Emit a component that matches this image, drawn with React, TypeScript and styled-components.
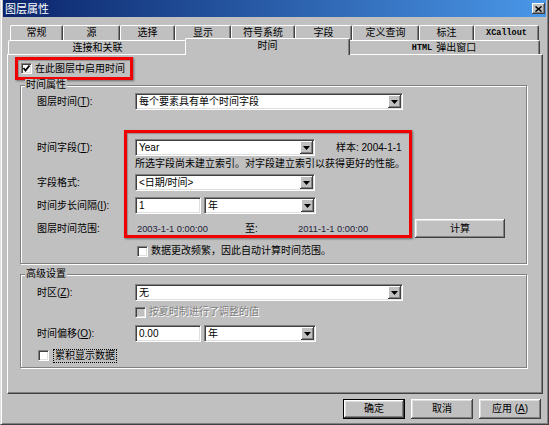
import React from "react";
import styled, { createGlobalStyle, css } from "styled-components";

const GlobalStyle = createGlobalStyle`
  html, body { margin: 0; padding: 0; background: #c0c0c0; }
  body {
    font-family: "Liberation Sans", "Noto Sans CJK SC", sans-serif;
    font-size: 10px;
    line-height: 12px;
    color: #000;
  }
  * { box-sizing: border-box; }
`;

const Window = styled.div`
  width: 549px;
  height: 425px;
  background: #c0c0c0;
  border-left: 1px solid #dfdfdf;
  border-right: 1px solid #404040;
  border-bottom: 1px solid #404040;
  box-shadow: inset 1px 0 #fff, inset -1px -1px #808080;
  padding: 0 2px 2px 2px;
  display: flex;
  flex-direction: column;
`;

const TitleBar = styled.div`
  height: 17px;
  flex: none;
  background: linear-gradient(to right, #0a246a, #4a97e8);
  display: flex;
  align-items: center;
  justify-content: space-between;
  padding: 0 1px 0 2px;
  color: #fff;
  font-size: 11px;
`;

const CloseBtn = styled.div`
  width: 13px;
  height: 11px;
  background: #c0c0c0;
  box-shadow: inset -1px -1px #404040, inset 1px 1px #fff, inset -2px -2px #808080;
  display: flex;
  align-items: center;
  justify-content: center;
`;

const Body = styled.div`
  flex: 1;
  display: flex;
  flex-direction: column;
  padding: 8px 3px 0 4px;
`;

const TabRow = styled.div<{ $h: number; $indent: number }>`
  display: flex;
  height: ${(p) => p.$h}px;
  padding-left: ${(p) => p.$indent}px;
  flex: none;
`;

const Tab = styled.div<{ $w: number; $selected?: boolean; $mono?: boolean }>`
  width: ${(p) => p.$w + (p.$selected ? 4 : 0)}px;
  height: 100%;
  flex: none;
  background: #c0c0c0;
  border-top: 1px solid #fff;
  border-left: 1px solid #fff;
  border-right: 1px solid #404040;
  box-shadow: inset -1px 0 #808080;
  border-top-left-radius: 2px;
  border-top-right-radius: 2px;
  display: flex;
  align-items: center;
  justify-content: center;
  font-size: 10px;
  white-space: pre;
  ${(p) =>
    p.$mono &&
    css`
      font-family: "Liberation Mono", "Noto Sans CJK SC", monospace;
      font-size: 8.5px;
      font-weight: bold;
    `}
  ${(p) =>
    p.$selected &&
    css`
      margin: -2px -2px -1px -2px;
      height: calc(100% + 3px);
      position: relative;
      z-index: 1;
      padding-bottom: 2px;
    `}
`;

const Mono = styled.span`
  font-family: "Liberation Mono", monospace;
  font-size: 8.5px;
  font-weight: bold;
  margin-right: 4px;
`;

const Panel = styled.div`
  height: 340px;
  flex: none;
  border-top: 1px solid #fff;
  border-left: 1px solid #fff;
  border-right: 1px solid #404040;
  border-bottom: 1px solid #404040;
  box-shadow: inset -1px -1px #808080;
  padding: 2px 0 0 7px;
  display: flex;
  flex-direction: column;
  align-items: flex-start;
`;

const EnableBox = styled.div`
  width: 118px;
  height: 23px;
  border: 3px solid #f00000;
  box-shadow: 1px 1px 2px rgba(0, 0, 0, 0.45), inset 1px 1px 1px rgba(0, 0, 0, 0.25);
  padding: 0 3px;
  display: flex;
  align-items: center;
`;

const Group = styled.div<{ $top: number; $h: number }>`
  position: relative;
  width: 507px;
  height: ${(p) => p.$h}px;
  margin: ${(p) => p.$top}px 0 0 5px;
  border: 1px solid #808080;
  box-shadow: inset 1px 1px #fff, 1px 1px #fff;
  padding-left: 16px;
  display: flex;
  flex-direction: column;
  align-items: flex-start;
`;

const Caption = styled.div`
  position: absolute;
  top: -7px;
  left: 4px;
  padding: 0 1px;
  background: #c0c0c0;
  line-height: 12px;
`;

const Highlight = styled.div<{ $l: number; $t: number; $w: number; $h: number }>`
  position: absolute;
  left: ${(p) => p.$l}px;
  top: ${(p) => p.$t}px;
  width: ${(p) => p.$w}px;
  height: ${(p) => p.$h}px;
  border: 3px solid #f00000;
  box-shadow: 1px 1px 2px rgba(0, 0, 0, 0.45), inset 1px 1px 1px rgba(0, 0, 0, 0.25);
  pointer-events: none;
`;

const FormRow = styled.div<{ $top: number; $h?: number }>`
  display: flex;
  align-items: center;
  height: ${(p) => p.$h ?? 17}px;
  margin-top: ${(p) => p.$top}px;
  flex: none;
`;

const Label = styled.div`
  width: 98px;
  flex: none;
  white-space: nowrap;
`;

const Sunken = css`
  height: 17px;
  flex: none;
  background: #fff;
  border: 1px solid;
  border-color: #808080 #fff #fff #808080;
  box-shadow: inset 1px 1px #404040, inset -1px -1px #dfdfdf;
  display: flex;
  align-items: center;
  padding: 1px;
`;

const ComboBox = styled.div<{ $w: number; $gap?: number }>`
  ${Sunken};
  width: ${(p) => p.$w}px;
  margin-left: ${(p) => p.$gap ?? 0}px;
`;

const ComboValue = styled.div`
  flex: 1;
  padding-left: 2px;
  white-space: nowrap;
  overflow: hidden;
`;

const DropBtn = styled.div`
  width: 13px;
  height: 13px;
  flex: none;
  background: #c0c0c0;
  box-shadow: inset -1px -1px #404040, inset 1px 1px #fff, inset -2px -2px #808080;
  display: flex;
  align-items: center;
  justify-content: center;
`;

const TextBox = styled.div<{ $w: number }>`
  ${Sunken};
  width: ${(p) => p.$w}px;
  padding-left: 3px;
`;

const Hint = styled.div<{ $top: number }>`
  margin: ${(p) => p.$top}px 0 0 98px;
  height: 13px;
  display: flex;
  align-items: center;
  white-space: nowrap;
`;

const Sample = styled.div`
  margin-left: 21px;
  white-space: nowrap;
`;

const Cell = styled.div<{ $w: number; $gap?: number; $dim?: boolean }>`
  width: ${(p) => p.$w}px;
  margin-left: ${(p) => p.$gap ?? 0}px;
  flex: none;
  white-space: nowrap;
  ${(p) =>
    p.$dim &&
    css`
      color: #23233a;
      font-size: 9.3px;
    `}
`;

const Button = styled.div<{ $w: number; $default?: boolean; $h?: number }>`
  width: ${(p) => p.$w}px;
  height: ${(p) => p.$h ?? 20}px;
  flex: none;
  background: #c0c0c0;
  display: flex;
  align-items: center;
  justify-content: center;
  box-shadow: inset -1px -1px #404040, inset 1px 1px #fff, inset -2px -2px #808080, inset 2px 2px #dfdfdf;
  ${(p) =>
    p.$default &&
    css`
      border: 1px solid #000;
    `}
`;

const CheckRow = styled.div<{ $top: number; $left: number; $h?: number; $gap?: number }>`
  display: flex;
  align-items: center;
  gap: ${(p) => p.$gap ?? 3}px;
  margin: ${(p) => p.$top}px 0 0 ${(p) => p.$left}px;
  height: ${(p) => p.$h ?? 13}px;
  flex: none;
  white-space: nowrap;
`;

const CheckBox = styled.div<{ $disabled?: boolean }>`
  width: 11px;
  height: 11px;
  flex: none;
  background: ${(p) => (p.$disabled ? "#c0c0c0" : "#fff")};
  border: 1px solid;
  border-color: #808080 #fff #fff #808080;
  box-shadow: inset 1px 1px #404040, inset -1px -1px #dfdfdf;
  display: flex;
  align-items: center;
  justify-content: center;
`;

const CheckText = styled.span<{ $disabled?: boolean; $focus?: boolean }>`
  ${(p) =>
    p.$disabled &&
    css`
      color: #808080;
      text-shadow: 1px 1px 0 #fff;
    `}
  ${(p) =>
    p.$focus &&
    css`
      border: 1px dotted #000;
      padding: 0 1px;
      line-height: 12px;
    `}
`;

const Footer = styled.div`
  display: flex;
  justify-content: flex-end;
  gap: 6px;
  margin-top: 5px;
  padding-right: 2px;
`;

const Arrow = () => (
  <svg width="7" height="4" viewBox="0 0 7 4">
    <polygon points="0,0 7,0 3.5,4" fill="#000" />
  </svg>
);

const Check = () => (
  <svg width="9" height="9" viewBox="0 0 9 9">
    <polyline points="1.5,4 3.5,6.5 7.5,1.5" fill="none" stroke="#000" strokeWidth="1.8" />
  </svg>
);

const Combo = ({ w, value, gap }: { w: number; value: string; gap?: number }) => (
  <ComboBox $w={w} $gap={gap}>
    <ComboValue>{value}</ComboValue>
    <DropBtn>
      <Arrow />
    </DropBtn>
  </ComboBox>
);

const row1Tabs: [string, number, boolean?][] = [
  ["常规", 53],
  ["源", 57],
  ["选择", 55],
  ["显示", 56],
  ["符号系统", 64],
  ["字段", 57],
  ["定义查询", 67],
  ["标注", 55],
  ["XCallout", 65, true],
];

export default function App() {
  return (
    <>
      <GlobalStyle />
      <Window>
        <TitleBar>
          <span>图层属性</span>
          <CloseBtn>
            <svg width="7" height="6" viewBox="0 0 7 6">
              <path d="M0.5 0.5 L6.5 5.5 M6.5 0.5 L0.5 5.5" stroke="#000" strokeWidth="1.5" />
            </svg>
          </CloseBtn>
        </TitleBar>
        <Body>
          <TabRow $h={15} $indent={3}>
            {row1Tabs.map(([t, w, mono]) => (
              <Tab key={t} $w={w} $mono={mono}>
                {t}
              </Tab>
            ))}
          </TabRow>
          <TabRow $h={14} $indent={1}>
            <Tab $w={179}>连接和关联</Tab>
            <Tab $w={161} $selected>
              时间
            </Tab>
            <Tab $w={192}>
              <Mono>HTML</Mono>弹出窗口
            </Tab>
          </TabRow>
          <Panel>
            <EnableBox>
              <CheckRow $top={0} $left={0}>
                <CheckBox>
                  <Check />
                </CheckBox>
                <span>在此图层中启用时间</span>
              </CheckRow>
            </EnableBox>

            <Group $top={5} $h={179}>
              <Caption>时间属性</Caption>
              <FormRow $top={7}>
                <Label>
                  图层时间(<u>T</u>):
                </Label>
                <Combo w={268} value="每个要素具有单个时间字段" />
              </FormRow>
              <FormRow $top={29}>
                <Label>
                  时间字段(<u>T</u>):
                </Label>
                <Combo w={180} value="Year" />
                <Sample>样本: 2004-1-1</Sample>
              </FormRow>
              <Hint $top={1}>所选字段尚未建立索引。对字段建立索引以获得更好的性能。</Hint>
              <FormRow $top={4}>
                <Label>字段格式:</Label>
                <Combo w={180} value="<日期/时间>" />
              </FormRow>
              <FormRow $top={6}>
                <Label>
                  时间步长间隔(<u>I</u>):
                </Label>
                <TextBox $w={66}>1</TextBox>
                <Combo w={112} gap={3} value="年" />
              </FormRow>
              <FormRow $top={5} $h={19}>
                <Label>图层时间范围:</Label>
                <Cell $w={108} $gap={2} $dim>
                  2003-1-1 0:00:00
                </Cell>
                <Cell $w={53}>至:</Cell>
                <Cell $w={117} $dim>
                  2011-1-1 0:00:00
                </Cell>
                <Button $w={90} $h={19}>
                  计算
                </Button>
              </FormRow>
              <CheckRow $top={6} $left={100} $h={14}>
                <CheckBox />
                <span>数据更改频繁，因此自动计算时间范围。</span>
              </CheckRow>
              <Highlight $l={103} $t={44} $w={288} $h={108} />
            </Group>

            <Group $top={10} $h={94}>
              <Caption>高级设置</Caption>
              <FormRow $top={9}>
                <Label>
                  时区(<u>Z</u>):
                </Label>
                <Combo w={268} value="无" />
              </FormRow>
              <CheckRow $top={5} $left={98} $h={12}>
                <CheckBox $disabled />
                <CheckText $disabled>按夏时制进行了调整的值</CheckText>
              </CheckRow>
              <FormRow $top={7}>
                <Label>
                  时间偏移(<u>O</u>):
                </Label>
                <TextBox $w={66}>0.00</TextBox>
                <Combo w={112} gap={3} value="年" />
              </FormRow>
              <CheckRow $top={6} $left={1} $h={15} $gap={4}>
                <CheckBox />
                <CheckText $focus>累积显示数据</CheckText>
              </CheckRow>
            </Group>
          </Panel>
          <Footer>
            <Button $w={62} $default>
              确定
            </Button>
            <Button $w={62}>取消</Button>
            <Button $w={62}>
              应用 (<u>A</u>)
            </Button>
          </Footer>
        </Body>
      </Window>
    </>
  );
}
